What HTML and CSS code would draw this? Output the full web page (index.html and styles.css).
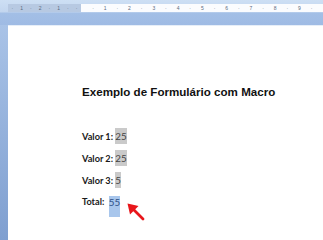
FILE: index.html
```html
<!DOCTYPE html>
<html>
<head>
<meta charset="utf-8">
<link rel="stylesheet" href="styles.css">
</head>
<body>
<div class="app">
  <div class="top">
    <div class="ruler">
      <div class="ruler-margin">
        <span class="tk">·</span><span class="tk">1</span><span class="tk">·</span><span class="tk">2</span><span class="tk">·</span><span class="tk">1</span><span class="tk">·</span><span class="tk">·</span>
      </div>
      <div class="ruler-body">
        <span class="n">·</span><span class="n">1</span><span class="n">·</span><span class="n">2</span><span class="n">·</span><span class="n">3</span><span class="n">·</span><span class="n">4</span><span class="n">·</span><span class="n">5</span><span class="n">·</span><span class="n">6</span><span class="n">·</span><span class="n">7</span><span class="n">·</span><span class="n">8</span><span class="n">·</span><span class="n">9</span><span class="n">·</span>
      </div>
    </div>
  </div>
  <div class="work">
    <div class="side"></div>
    <div class="page">
      <h1 class="title">Exemplo de Formulário com Macro</h1>
      <div class="row"><span class="lbl">Valor 1:</span> <span class="fld">25</span></div>
      <div class="row"><span class="lbl">Valor 2:</span> <span class="fld">25</span></div>
      <div class="row"><span class="lbl">Valor 3:</span> <span class="fld">5</span></div>
      <div class="row"><span class="lbl">Total:</span>&nbsp; <span class="sel">55</span></div>
      <svg class="arrow" width="20" height="20" viewBox="0 0 20 20">
        <line x1="6" y1="6" x2="16" y2="16" stroke="#e8161b" stroke-width="2.8" stroke-linecap="round"/>
        <polygon points="0.5,0.5 11.5,3 3,11.5" fill="#e8161b"/>
      </svg>
    </div>
  </div>
</div>
</body>
</html>
```

FILE: styles.css
```css
html, body { margin: 0; padding: 0; }
body { background: #ffffff; }
.app {
  width: 323px;
  height: 240px;
  overflow: hidden;
  display: flex;
  flex-direction: column;
  background: #a6c1e6;
}
.top {
  height: 25px;
  flex: none;
  box-sizing: border-box;
  padding: 4px 0 0 8px;
  background: linear-gradient(#cddff4 0, #c3d6ef 12px, #a3bfe6 13px, #9fbbe4 25px);
}
.ruler {
  display: flex;
  height: 8px;
  font-family: "Liberation Sans", Arial, sans-serif;
  font-size: 5px;
  line-height: 8px;
  color: #5a6a80;
}
.ruler-margin {
  width: 73px;
  flex: none;
  background: #b7c9e2;
  display: flex;
  justify-content: space-around;
}
.ruler-body {
  flex: 1;
  background: #fbfcfe;
  display: flex;
  padding-left: 6px;
  overflow: hidden;
}
.ruler-body .n { width: 12.15px; text-align: center; flex: none; }
.tk { flex: none; }
.work {
  flex: 1;
  display: flex;
}
.side {
  width: 8px;
  flex: none;
  background: linear-gradient(#a9c3e7, #7f9fd0);
}
.page {
  flex: 1;
  background: #ffffff;
  position: relative;
  padding: 59px 0 0 74px;
  border-top: 1px solid #e6eef8;
}
.title {
  margin: 0 0 26px 0;
  font-family: "Liberation Sans", Arial, sans-serif;
  font-weight: bold;
  font-size: 11.6px;
  line-height: 14px;
  color: #111111;
  letter-spacing: 0;
}
.row {
  font-family: Lato, "Open Sans", sans-serif;
  font-weight: bold;
  font-size: 9.2px;
  line-height: 22px;
  height: 22px;
  color: #1a1a1a;
  white-space: nowrap;
}
.fld {
  background: #cacaca;
  font-weight: normal;
  color: #444444;
  font-size: 9.8px;
  padding: 2px 0 2px;
}
.sel {
  display: inline-block;
  vertical-align: top;
  margin-top: 5px;
  background: #a8c6ec;
  color: #2d4f86;
  font-weight: normal;
  font-size: 9.8px;
  width: 11px;
  height: 21px;
  line-height: 12px;
  text-align: center;
}
.arrow {
  position: absolute;
  left: 119px;
  top: 177px;
}
```
